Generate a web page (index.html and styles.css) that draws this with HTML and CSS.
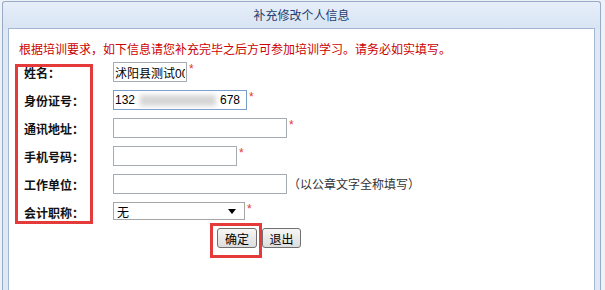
FILE: index.html
```html
<!DOCTYPE html>
<html lang="zh-CN">
<head>
    <meta charset="UTF-8">
    <title>补充修改个人信息</title>
    <link rel="stylesheet" href="styles.css">
</head>
<body>

<div class="dialog">
    <div class="dialog-title">补充修改个人信息</div>
    <div class="dialog-body">
        <p class="notice">根据培训要求，如下信息请您补充完毕之后方可参加培训学习。请务必如实填写。</p>
        <form class="info-form" onsubmit="return false">
            <div class="label-box">
                <label>姓名：</label>
                <label>身份证号：</label>
                <label>通讯地址：</label>
                <label>手机号码：</label>
                <label>工作单位：</label>
                <label>会计职称：</label>
            </div>
            <div class="fields">
                <div class="field-row">
                    <input class="w-name" type="text" value="沭阳县测试001">
                    <span class="req">*</span>
                </div>
                <div class="field-row">
                    <span class="id-input">132<span class="blur"></span>678</span>
                    <span class="req">*</span>
                </div>
                <div class="field-row">
                    <input class="w-long" type="text">
                    <span class="req">*</span>
                </div>
                <div class="field-row">
                    <input class="w-phone" type="text">
                    <span class="req">*</span>
                </div>
                <div class="field-row">
                    <input class="w-long" type="text">
                    <span class="hint">（以公章文字全称填写）</span>
                </div>
                <div class="field-row">
                    <select class="title-select">
                        <option>无</option>
                        <option>初级</option>
                        <option>中级</option>
                        <option>高级</option>
                    </select>
                    <span class="req">*</span>
                </div>
                <div class="btn-row">
                    <span class="mark"><button type="submit">确定</button></span>
                    <button type="button" class="btn-exit">退出</button>
                </div>
            </div>
        </form>
    </div>
</div>

</body>
</html>
```

FILE: styles.css
```css
* {
    box-sizing: border-box;
}

html,
body {
    height: 290px;
}

body {
    margin: 0;
    background-color: #eef1f5;
    font-family: "Noto Sans CJK SC", sans-serif;
    font-size: 12px;
    overflow: hidden;
}

.dialog {
    margin: 1px 4px 0 2px;
    height: 289px;
    padding: 0 5px;
    border: 1px solid #98abc6;
    border-bottom: none;
    border-radius: 3px 3px 0 0;
    background: linear-gradient(to bottom, #e6eef9 0, #d8e4f3 27px, #dfe8f6 28px, #dfe8f6 100%);
}

.dialog-title {
    height: 26px;
    line-height: 26px;
    text-align: center;
    color: #1f3f70;
}

.dialog-body {
    height: 262px;
    padding-left: 6px;
    background-color: #fff;
    border: 1px solid #a3b7d2;
    border-bottom: none;
}

.notice {
    margin: 0;
    padding: 12px 0 0 4px;
    line-height: 16px;
    color: #cc0000;
}

.info-form {
    display: flex;
    align-items: flex-start;
    margin-top: 5px;
}

/* red annotation round the labels */
.label-box {
    width: 78px;
    margin-top: 2px;
    padding: 0 0 2px 6px;
    display: flex;
    flex-direction: column;
    gap: 16px;
    border: 3px solid #e53a3a;
}

.label-box label {
    line-height: 12px;
    font-weight: bold;
    color: #111;
}

.fields {
    margin-left: 20px;
    display: flex;
    flex-direction: column;
    gap: 8px;
}

.field-row {
    display: flex;
    align-items: flex-start;
    height: 20px;
}

input,
.id-input {
    height: 20px;
    padding: 0 1px;
    border: 1px solid #a5acb2;
    font: 12px "Liberation Sans", "Noto Sans CJK SC", sans-serif;
    color: #000;
    outline: none;
}

.w-name {
    width: 74px;
}

.w-long {
    width: 174px;
}

.w-phone {
    width: 124px;
}

.id-input {
    width: 134px;
    padding: 0 6px 0 1px;
    display: flex;
    align-items: center;
    justify-content: space-between;
    border-color: #7a9fcf;
}

.blur {
    width: 76px;
    height: 11px;
    background-color: #d6d6d6;
    filter: blur(2.5px);
}

.req {
    margin: 1px 0 0 2px;
    font-family: "Liberation Sans", sans-serif;
    font-size: 12px;
    line-height: 12px;
    color: #e2343c;
}

.hint {
    margin-left: 1px;
    line-height: 20px;
    color: #333;
}

.title-select {
    width: 132px;
    height: 18px;
    padding: 0 0 0 3px;
    border: 1px solid #a5a5a5;
    font: 12px "Noto Sans CJK SC", sans-serif;
    color: #000;
    -webkit-appearance: none;
    appearance: none;
    background: #fff url("data:image/svg+xml,%3Csvg xmlns='http://www.w3.org/2000/svg' width='8' height='5'%3E%3Cpath d='M0 0h8L4 5z' fill='%23000'/%3E%3C/svg%3E") no-repeat right 8px center;
}

.btn-row {
    display: flex;
    align-items: flex-start;
    margin-top: -2px;
    padding-left: 97px;
}

/* red annotation round the confirm button */
.mark {
    display: flex;
    margin-top: -5px;
    padding: 2px 2px 7px 4px;
    border: 3px solid #e53a3a;
}

button {
    width: 40px;
    height: 20px;
    padding: 0;
    border: 1px solid #707070;
    border-radius: 3px;
    background: linear-gradient(to bottom, #f6f6f6, #dddddd);
    font: 12px "Noto Sans CJK SC", sans-serif;
    color: #000;
}

.btn-exit {
    width: 39px;
}
```
